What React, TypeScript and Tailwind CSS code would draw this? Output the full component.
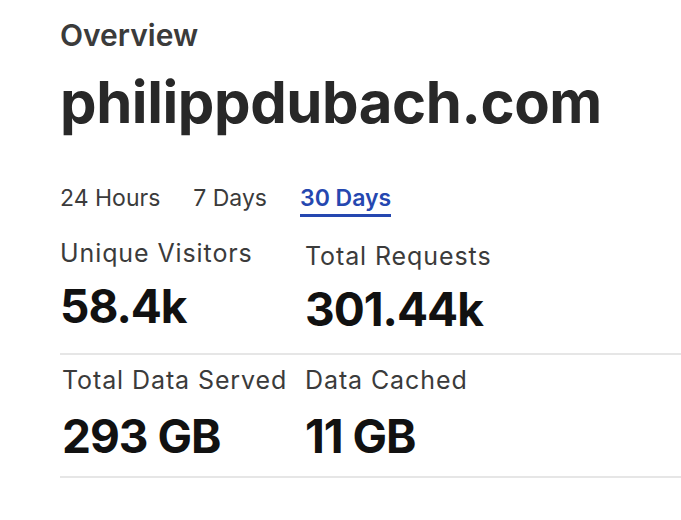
import React, { useState } from 'react';

interface Stat {
  label: string;
  value: string;
  shift?: string;
}

const rows: Stat[][] = [
  [
    { label: 'Unique Visitors', value: '58.4k' },
    { label: 'Total Requests', value: '301.44k', shift: 'pt-[3px]' },
  ],
  [
    { label: 'Total Data Served', value: '293 GB', shift: 'pl-[2px]' },
    { label: 'Data Cached', value: '11 GB' },
  ],
];

const ranges = ['24 Hours', '7 Days', '30 Days'];

const App: React.FC = () => {
  const [range, setRange] = useState('30 Days');

  return (
    <div className="min-h-[520px] bg-white pl-[60px] pt-[16px] font-['Inter','Liberation_Sans',sans-serif]">
      <div className="text-[30px] font-semibold leading-[38px] text-[#3b3b3b]">Overview</div>
      <h1 className="mt-[12px] text-[58px] font-bold leading-[72px] tracking-[-0.4px] text-[#282828]">
        philippdubach.com
      </h1>

      <div className="mt-[46px] flex gap-[33px]">
        {ranges.map((r) => (
          <button
            key={r}
            onClick={() => setRange(r)}
            className={
              r === range
                ? 'border-b-[3px] border-[#2547b0] pb-[2px] text-[23px] font-semibold leading-[28px] text-[#2547b0]'
                : 'border-b-[3px] border-transparent pb-[2px] text-[23px] leading-[28px] text-[#3b3b3b]'
            }
          >
            {r}
          </button>
        ))}
      </div>

      <div className="mt-[12px]">
        {rows.map((row, i) => (
          <div
            key={i}
            className={
              i === 0
                ? 'grid grid-cols-[245px_1fr] border-b-2 border-[#e6e6e6] pb-[18px] pt-[8px]'
                : 'grid grid-cols-[245px_1fr] border-b-2 border-[#e6e6e6] pb-[14px] pt-[9px]'
            }
          >
            {row.map((s) => (
              <div key={s.label} className={s.shift}>
                <div className="text-[25px] leading-[32px] tracking-[0.9px] text-[#3b3b3b]">{s.label}</div>
                <div
                  className={
                    i === 0
                      ? 'mt-[11px] text-[46px] font-bold leading-[52px] tracking-[-1px] text-[#111111]'
                      : 'mt-[14px] text-[46px] font-bold leading-[52px] tracking-[-1px] text-[#111111]'
                  }
                >
                  {s.value}
                </div>
              </div>
            ))}
          </div>
        ))}
      </div>
    </div>
  );
};

export default App;
